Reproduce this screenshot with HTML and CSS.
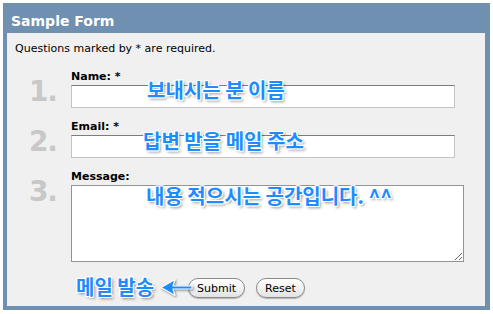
FILE: index.html
```html
<!DOCTYPE html>
<html>
    <head lang="ko">
        <meta charset="UTF-8">
        <title>Sample Form</title>
        <link rel="stylesheet" href="styles.css">
    </head>
    <body>
        <div class="box">
            <h1 class="box-title">Sample Form</h1>
            <div class="box-body">
                <p class="note">Questions marked by * are required.</p>
                <form class="form">
                    <div class="row">
                        <span class="num">1.</span>
                        <div class="field">
                            <label class="label">Name: *</label>
                            <input class="text" type="text">
                        </div>
                    </div>
                    <div class="row">
                        <span class="num">2.</span>
                        <div class="field">
                            <label class="label">Email: *</label>
                            <input class="text" type="text">
                        </div>
                    </div>
                    <div class="row">
                        <span class="num">3.</span>
                        <div class="field">
                            <label class="label">Message:</label>
                            <textarea class="area"></textarea>
                        </div>
                    </div>
                    <div class="row">
                        <span></span>
                        <div class="actions">
                            <button class="btn" type="button">Submit</button>
                            <button class="btn" type="reset">Reset</button>
                        </div>
                    </div>
                </form>
                <span class="tip tip-name">보내시는 분 이름</span>
                <span class="tip tip-mail">답변 받을 메일 주소</span>
                <span class="tip tip-msg">내용 적으시는 공간입니다. ^^</span>
                <span class="tip tip-send">메일 발송</span>
                <svg class="arrow" width="36" height="20" viewBox="0 0 36 20">
                    <path d="M3 9.5 L17 1.5 L15 8 L34 8 L34 11 L15 11 L17 17.5 Z" fill="#1e8cff" stroke="#fff" stroke-width="1.2" stroke-linejoin="round"/>
                </svg>
            </div>
        </div>
    </body>
</html>
```

FILE: styles.css
```css
*{
    margin:0;
    padding:0;
}
body{
    background:#fff;
    font-family:"DejaVu Sans", Verdana, sans-serif;
    font-size:11px;
    color:#000;
}
.box{
    width:478px;
    margin:3px;
    padding:0 5px 4px 4px;
    background:#6f90b0;
}
.box-title{
    height:24px;
    padding:6px 0 0 4px;
    line-height:24px;
    font-size:14px;
    font-weight:bold;
    color:#fff;
}
.box-body{
    position:relative;
    height:264px;
    padding:9px 0 0 8px;
    background:#f0f0f0;
}
.note{
    line-height:14px;
}
.form{
    display:flex;
    flex-direction:column;
    gap:12px;
    margin-top:14px;
}
.row{
    display:grid;
    grid-template-columns:56px auto;
}
.num{
    margin-top:8px;
    padding-right:14px;
    text-align:right;
    font-size:28px;
    line-height:28px;
    font-weight:bold;
    letter-spacing:-1px;
    color:#c8c8c8;
}
.field{
    display:flex;
    flex-direction:column;
    gap:2px;
}
.label{
    line-height:13px;
    font-weight:bold;
}
.text{
    display:block;
    box-sizing:border-box;
    width:384px;
    height:23px;
    border:1px solid #c4c4c4;
    border-top-color:#7c7c7c;
    background:#fff;
}
.area{
    display:block;
    box-sizing:border-box;
    width:393px;
    height:77px;
    border:1px solid #939393;
    background:#fff;
    resize:both;
}
.actions{
    display:flex;
    gap:11px;
    margin-top:4px;
    padding-left:117px;
}
.btn{
    height:20px;
    padding:0 8px;
    border:1px solid #8a8a8a;
    border-radius:10px;
    background:linear-gradient(#ffffff, #f2f2f2 50%, #e2e2e2);
    box-shadow:0 1px 1px rgba(0,0,0,0.25);
    font-family:"DejaVu Sans", Verdana, sans-serif;
    font-size:11px;
    color:#000;
}
.tip{
    position:absolute;
    font-family:"Noto Sans CJK KR", sans-serif;
    font-size:20px;
    line-height:20px;
    font-weight:bold;
    white-space:nowrap;
    color:#1e8cff;
    text-shadow:-1px -1px 0 #fff, 1px -1px 0 #fff, -1px 1px 0 #fff, 1px 1px 0 #fff,
        0 -1px 0 #fff, 0 1px 0 #fff, -1px 0 0 #fff, 1px 0 0 #fff,
        2px 2px 3px rgba(0,0,0,0.45);
}
.tip-name{
    left:140px;
    top:47px;
}
.tip-mail{
    left:136px;
    top:98px;
}
.tip-msg{
    left:139px;
    top:153px;
}
.tip-send{
    left:69px;
    top:244px;
}
.arrow{
    position:absolute;
    left:151px;
    top:245px;
    filter:drop-shadow(1px 1px 1px rgba(0,0,0,0.45));
}
```
